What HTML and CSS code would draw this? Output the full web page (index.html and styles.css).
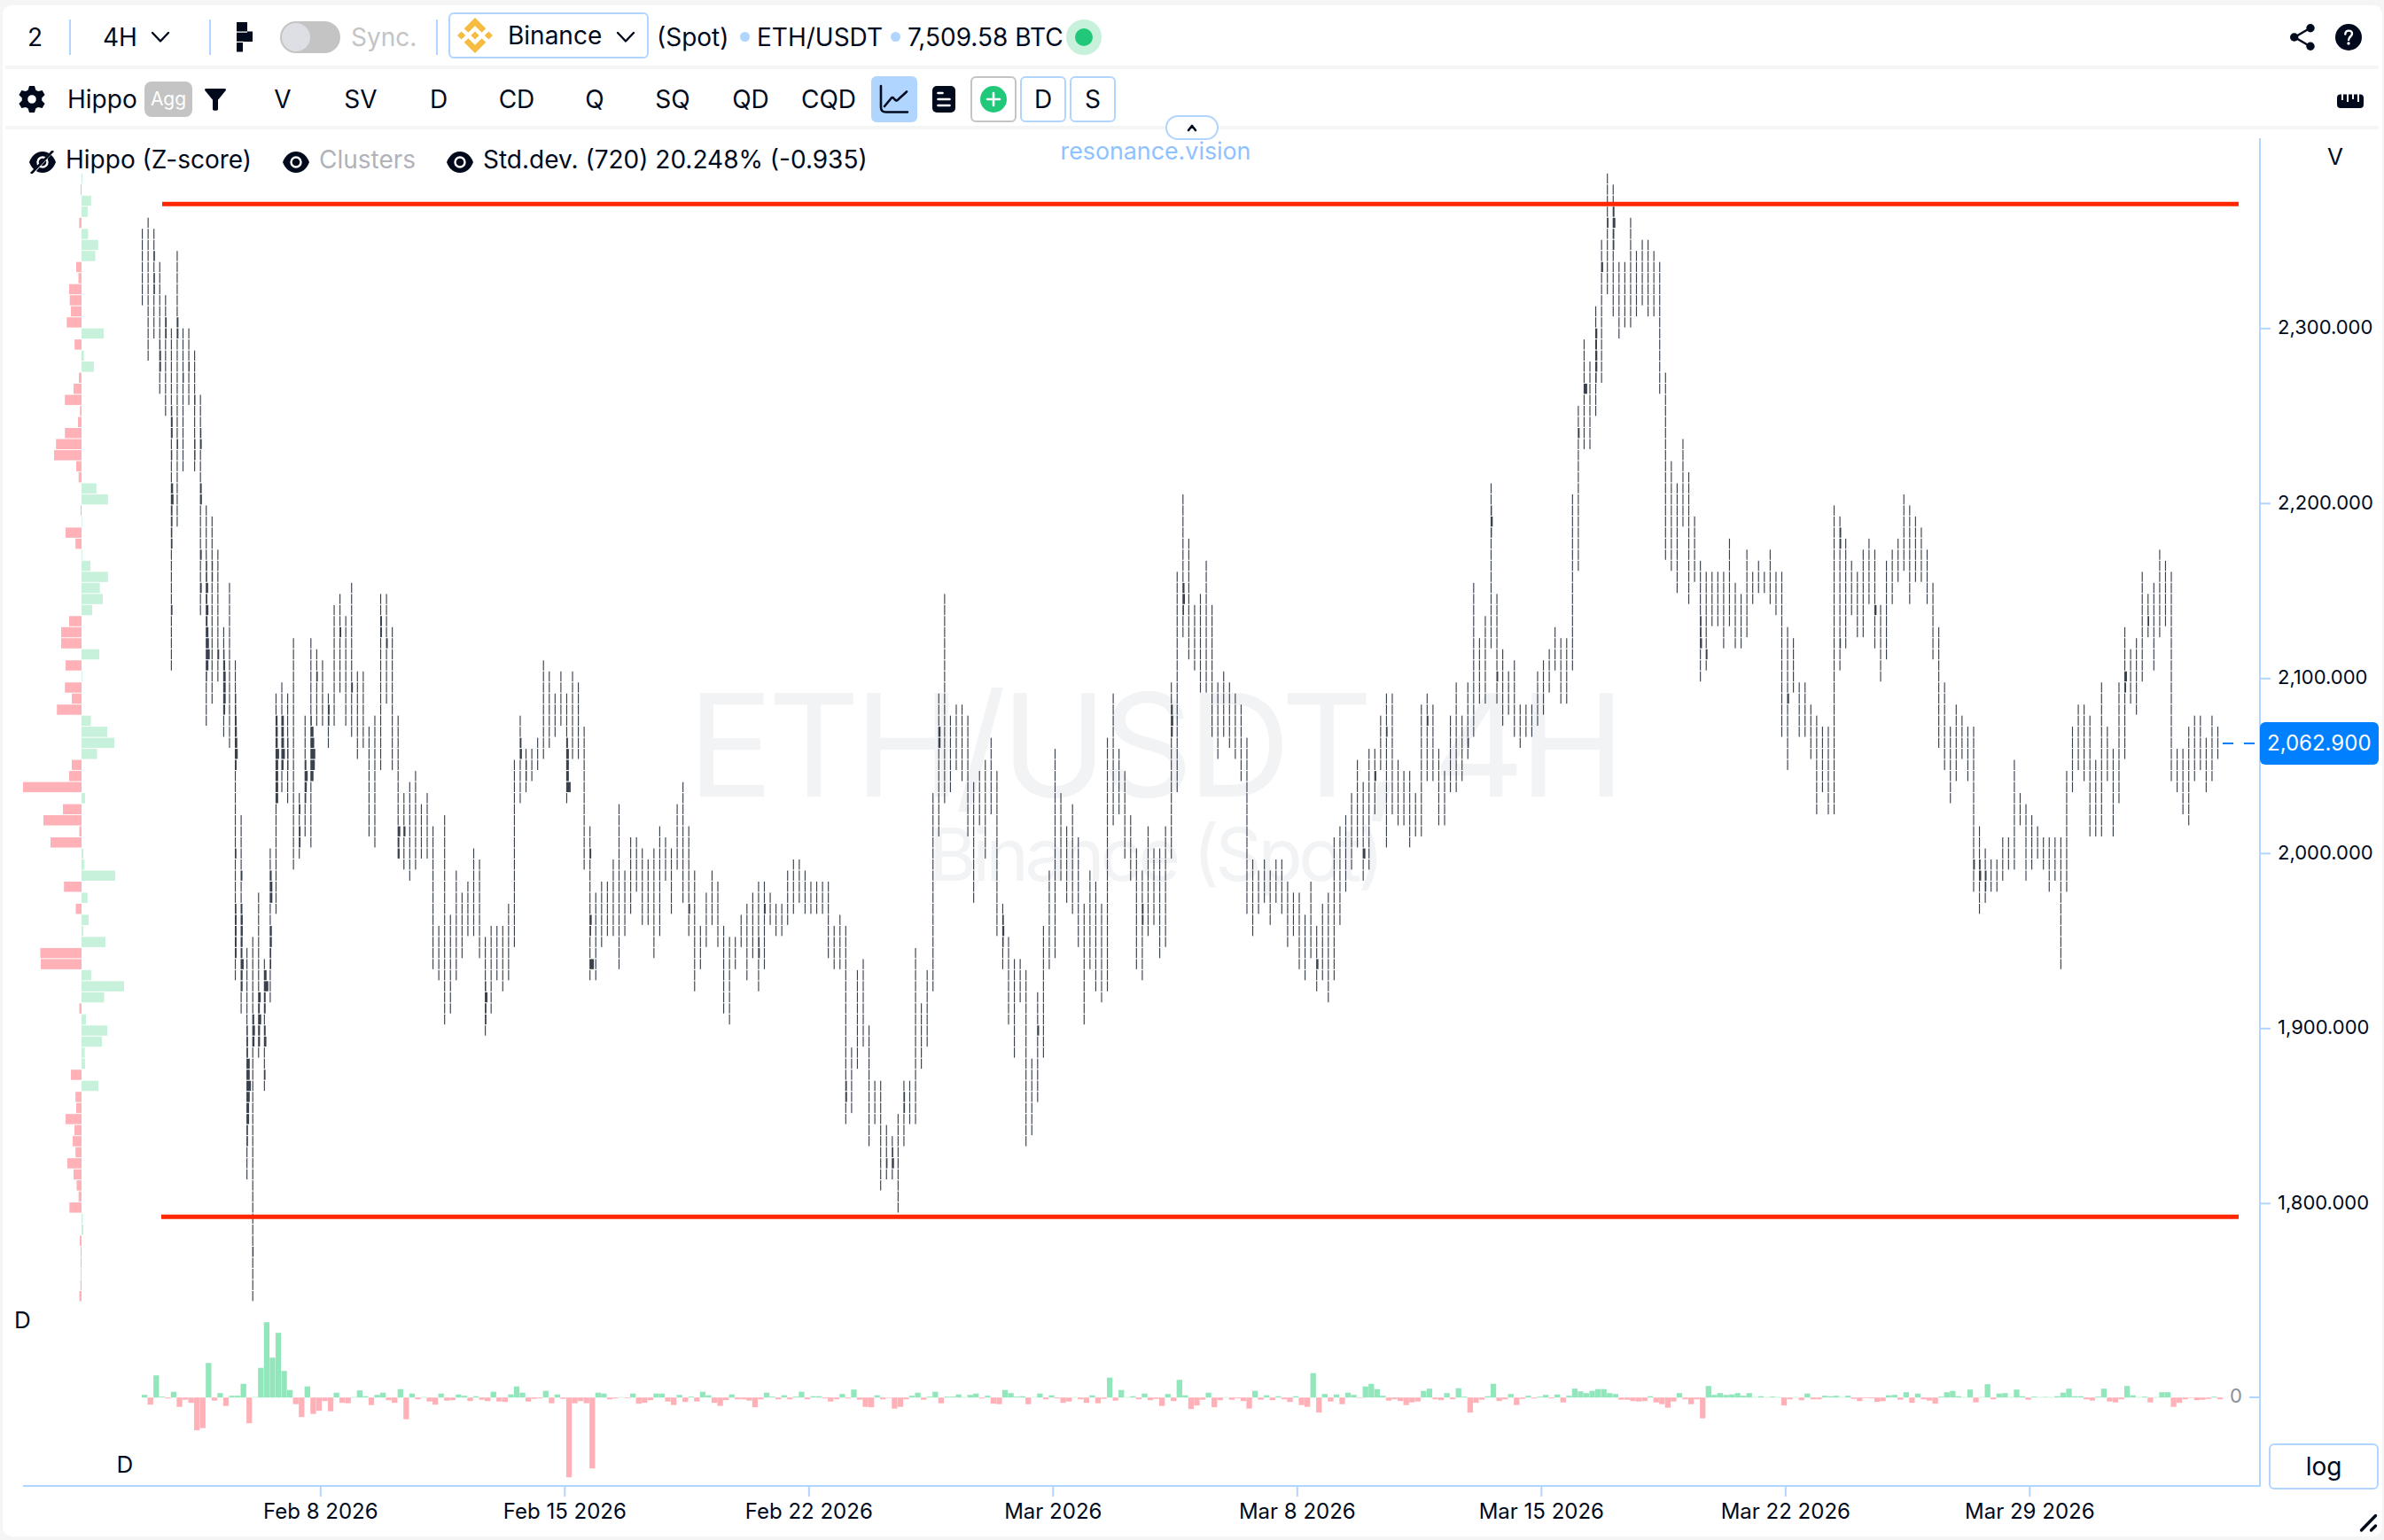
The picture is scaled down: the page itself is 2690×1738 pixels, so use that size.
FILE: index.html
```html
<!DOCTYPE html>
<html lang="en">
<head>
	<meta charset="utf-8">
	<title>ETH/USDT 4H</title>
	<link rel="stylesheet" href="styles.css">
</head>
<body>
	<div class="panel">
		<div class="bar top">
			<span class="number">2</span>
			<i class="sep"></i>
			<div class="timeframe">4H
				<svg class="chevron" width="22" height="14" viewBox="0 0 22 14"><path d="M2 2l9 9.500l9-9.500"/></svg>
			</div>
			<i class="sep"></i>
			<svg class="cluster-icon" width="18" height="34" viewBox="0 0 18 34"><path d="M0 0h12v10.500h6v11.500H7v11.500H0V22.500h0V12h0z"/><path class="cut" d="M0 11.200h12M0 22.400h8"/></svg>
			<div class="toggle"><i></i></div>
			<span class="sync">Sync.</span>
			<i class="sep"></i>
			<div class="select">
				<svg width="40" height="40" viewBox="0 0 40 40"><path d="M20 0l12.300 12.200-4.600 4.600L20 9.200l-7.700 7.600-4.600-4.600zM20 40l12.300-12.200-4.600-4.600L20 30.800l-7.700-7.600-4.600 4.600zM4.600 15.400L9.200 20l-4.600 4.600L0 20zM35.400 15.400L40 20l-4.600 4.600-4.600-4.600zM20 15.400l4.600 4.600-4.600 4.600-4.600-4.600z"/></svg>
				<span>Binance</span>
				<svg class="chevron" width="22" height="14" viewBox="0 0 22 14"><path d="M2 2l9 9.500l9-9.500"/></svg>
			</div>
			<span class="spot">(Spot)</span>
			<i class="dot"></i>
			<span class="pair">ETH/USDT</span>
			<i class="dot"></i>
			<span class="volume">7,509.58 BTC</span>
			<i class="status"></i>
			<div class="right">
				<svg width="28" height="30" viewBox="0 0 28 30"><path class="line" d="M23 4.500L5 15l18 10.500"/><circle cx="23" cy="4.700" r="4.700"/><circle cx="4.700" cy="15" r="4.700"/><circle cx="23" cy="25.300" r="4.700"/></svg>
				<svg width="30" height="30" viewBox="0 0 30 30"><circle cx="15" cy="15" r="15"/><path class="mark" d="M11.300 11.500c0-2.500 1.600-3.900 3.800-3.900s3.900 1.400 3.900 3.500c0 3.200-3.900 3.200-3.900 6.900"/><circle class="point" cx="15" cy="22" r="1.700"/></svg>
			</div>
		</div>

		<div class="bar tools">
			<svg class="gear" width="30" height="30" viewBox="0 0 30 30"><path fill-rule="evenodd" d="M12 0h6l1.300 4.600 2.600 1.500 4.700-1.200 3 5.200-3.400 3.400v3l3.400 3.400-3 5.200-4.700-1.200-2.600 1.500L18 30h-6l-1.300-4.600-2.600-1.500-4.700 1.200-3-5.200 3.400-3.400v-3L.4 10.100l3-5.200 4.700 1.200 2.600-1.500zM15 10.200a4.800 4.800 0 1 0 0 9.600 4.800 4.800 0 0 0 0-9.600z"/></svg>
			<span class="name">Hippo</span>
			<span class="agg">Agg</span>
			<svg class="filter" width="24" height="25" viewBox="0 0 24 25"><path d="M1.500 0h21c1.300 0 1.900 1.300 1.100 2.300L15 12.800V23c0 1-.8 1.700-1.700 1.700h-2.600C9.700 24.700 9 24 9 23V12.800L.4 2.300C-.4 1.300.2 0 1.500 0z"/></svg>
			<div class="tabs">
				<span>V</span><span>SV</span><span>D</span><span>CD</span><span>Q</span><span>SQ</span><span>QD</span><span>CQD</span>
			</div>
			<div class="buttons">
				<div class="btn active"><svg width="34" height="34" viewBox="0 0 34 34"><path class="line" d="M2 2v24c0 3.300 2 5.500 5.500 5.500H32M6 25l7.500-9c1-1.200 2-1.200 3 0l1.500 1.700c1 1.200 2 1.100 3 0L31 8.500"/></svg></div>
				<div class="btn plain"><svg width="26" height="30" viewBox="0 0 26 30"><rect width="26" height="30" rx="5"/><path class="rows" d="M6.500 8h5M6.500 15h13M6.500 22h13"/></svg></div>
				<div class="btn gray"><svg width="30" height="30" viewBox="0 0 30 30"><circle class="green" cx="15" cy="15" r="15"/><path class="rows" d="M15 8v14M8 15h14"/></svg></div>
				<div class="btn">D</div>
				<div class="btn">S</div>
			</div>
			<svg class="ruler" width="30" height="16" viewBox="0 0 30 16"><path d="M4 .5h22a4 4 0 0 1 4 4V12a4 4 0 0 1-4 4H4a4 4 0 0 1-4-4V4.500a4 4 0 0 1 4-4z"/><path class="teeth" d="M6 0v7M12 0v9M18 0v6M24 0v9"/></svg>
			<div class="collapse"><svg width="14" height="10" viewBox="0 0 14 10"><path class="line" d="M3 8l4-5l4 5"/></svg></div>
		</div>

		<div class="chart">
			<svg id="plot" width="2685" height="1588" viewBox="3 146 2685 1588">
				<text class="mark-big" x="776" y="898.500" textLength="1058">ETH/USDT, 4H</text>
				<text class="mark-small" x="1048" y="994" textLength="514">Binance (Spot)</text>
				<g id="profile"></g>
				<g id="delta"></g>
				<g id="candles"></g>
				<path class="level" d="M183 230.200H2526M182 1373.300H2526"/>
				<path class="last" d="M2508 839H2544"/>
				<path class="axis" d="M2550 156V1677M26 1677H2551M2538 1577H2550"/>
				<g id="ticks"></g>
				<text class="scale-name" x="2626" y="186">V</text>
				<text class="scale-name" x="16" y="1499">D</text>
				<text class="scale-name" x="131.500" y="1662">D</text>
				<text class="zero" x="2516" y="1583">0</text>
				<rect class="price" x="2550" y="815" width="134" height="48" rx="6"/>
				<text class="price-text" x="2558" y="847">2,062.900</text>
				<path class="resize" d="M2664.500 1727L2680.500 1710.500M2675.500 1727l5-5"/>
			</svg>
			<div class="legend">
				<svg width="30" height="26" viewBox="0 0 30 26"><path d="M0 13C3 5 8.500 1 15 1s12 4 15 12c-3 8-8.500 12-15 12S3 21 0 13z"/><circle class="ring" cx="15" cy="13" r="5.500"/><path class="slash-bg" d="M4 25L28-1"/><path class="slash" d="M2 26L27 0"/></svg>
				<span class="l-hippo">Hippo (Z-score)</span>
				<svg width="30" height="26" viewBox="0 0 30 26"><path d="M0 13C3 5 8.500 1 15 1s12 4 15 12c-3 8-8.500 12-15 12S3 21 0 13z"/><circle class="ring" cx="15" cy="13" r="5.500"/><circle cx="15" cy="13" r="2.500"/></svg>
				<span class="l-clusters">Clusters</span>
				<svg width="30" height="26" viewBox="0 0 30 26"><path d="M0 13C3 5 8.500 1 15 1s12 4 15 12c-3 8-8.500 12-15 12S3 21 0 13z"/><circle class="ring" cx="15" cy="13" r="5.500"/><circle cx="15" cy="13" r="2.500"/></svg>
				<span>Std.dev. (720) 20.248% (-0.935)</span>
			</div>
			<div class="brand">resonance.vision</div>
			<div class="log">log</div>
		</div>
	</div>
	<script src="script.js"></script>
</body>
</html>
```

FILE: styles.css
```css
* {
	box-sizing: border-box;
}
body {
	margin: 0;
	padding: 6px 2px 4px 3px;
	height: 1738px;
	background-color: #f5f5f5;
	font-family: Inter, "Liberation Sans", sans-serif;
	font-size: 28px;
	line-height: 34px;
	color: #000a1c;
	overflow: hidden;
}
svg {
	display: block;
	flex: none;
	fill: #000a1c;
}
.panel {
	height: 1728px;
	background-color: white;
	border-radius: 10px;
}
.bar {
	display: flex;
	align-items: center;
	margin: 0 4px 0 3px;
	padding-top: 4px;
	border-bottom: 4px solid #f5f5f5;
	white-space: nowrap;
}
.top {
	height: 72px;
}
.tools {
	position: relative;
	height: 68px;
}
.line {
	fill: none;
	stroke: #000a1c;
	stroke-width: 2.6;
	stroke-linecap: round;
	stroke-linejoin: round;
}
.chevron {
	fill: none;
	stroke: #000a1c;
	stroke-width: 2.4;
	stroke-linecap: round;
	stroke-linejoin: round;
}

/* top bar */
.number {
	width: 72px;
	padding-left: 25px;
}
.sep {
	flex: none;
	width: 2px;
	height: 40px;
	background-color: #b0d6ff;
}
.timeframe {
	display: flex;
	align-items: center;
	gap: 15px;
	width: 156px;
	padding-left: 36px;
}
.cluster-icon {
	margin: 0 31px 0 29px;
}
.cut {
	stroke: white;
	stroke-width: 1.2;
}
.toggle {
	flex: none;
	width: 68px;
	height: 36px;
	border-radius: 18px;
	background-color: #c4c4c4;
}
.toggle i {
	display: block;
	width: 32px;
	height: 32px;
	margin: 2px;
	border-radius: 50%;
	background-color: #dedfe4;
}
.sync {
	width: 108px;
	padding-left: 12px;
	color: #c4c4c4;
}
.select {
	display: flex;
	align-items: center;
	width: 226px;
	height: 52px;
	margin: -4px 9px 0 12px;
	padding: 0 8px;
	border: 2px solid #b0d6ff;
	border-radius: 6px;
}
.select > svg:first-child {
	fill: #f5bc41;
}
.select span {
	width: 139px;
	padding-left: 17px;
	margin-top: -1px;
}
.select .chevron {
	margin-top: 4px;
}
.spot {
	width: 94px;
}
.dot {
	flex: none;
	width: 11px;
	height: 11px;
	margin-top: -2px;
	border-radius: 50%;
	background-color: #b0d6ff;
}
.pair {
	width: 159px;
	padding-left: 8px;
}
.volume {
	width: 187px;
	padding-left: 8px;
}
.status {
	flex: none;
	width: 40px;
	height: 40px;
	border: 10px solid #c8f1db;
	border-radius: 50%;
	background-color: #22c879;
}
.right {
	display: flex;
	gap: 23px;
	margin-left: auto;
	padding-right: 19px;
}
.mark {
	fill: none;
	stroke: white;
	stroke-width: 2.4;
	stroke-linecap: round;
}
.point {
	fill: white;
}

/* tools bar */
.gear {
	margin: 0 25px 0 15px;
}
.name {
	width: 87px;
}
.agg {
	width: 54px;
	height: 40px;
	border-radius: 8px;
	background-color: #c4c4c4;
	color: white;
	font-size: 21px;
	line-height: 40px;
	text-align: center;
}
.filter {
	margin: 0 22px 0 14px;
}
.tabs, .buttons {
	display: flex;
	gap: 4px;
}
.tabs span {
	width: 84px;
	text-align: center;
}
.buttons {
	margin-left: 6px;
}
.btn {
	display: flex;
	align-items: center;
	justify-content: center;
	width: 52px;
	height: 52px;
	border: 2px solid #b0d6ff;
	border-radius: 6px;
}
.active {
	background-color: #b0d6ff;
}
.plain {
	border-color: transparent;
}
.gray {
	border-color: #c4c4c4;
}
.green {
	fill: #22c879;
}
.rows {
	stroke: white;
	stroke-width: 2.6;
	stroke-linecap: round;
}
.ruler {
	margin-left: auto;
	margin-right: 17px;
	margin-top: 4px;
}
.teeth {
	stroke: white;
	stroke-width: 2;
}
.collapse {
	position: absolute;
	z-index: 2;
	left: 1309px;
	bottom: -16px;
	display: flex;
	align-items: center;
	justify-content: center;
	width: 60px;
	height: 28px;
	border: 2px solid #b0d6ff;
	border-radius: 14px;
	background-color: white;
}

/* chart */
.chart {
	position: relative;
	height: 1588px;
}
.legend {
	position: absolute;
	left: 30px;
	top: 17px;
	display: flex;
	align-items: center;
	gap: 11px;
	white-space: nowrap;
}
.legend svg {
	margin-top: 6px;
}
.l-hippo {
	width: 234px;
}
.l-clusters {
	width: 133px;
	color: #b0b3ba;
}
.ring {
	fill: none;
	stroke: white;
	stroke-width: 2.4;
}
.slash-bg {
	stroke: white;
	stroke-width: 3;
}
.slash {
	stroke: #000a1c;
	stroke-width: 2.6;
}
.brand {
	position: absolute;
	left: 1193.5px;
	top: 7px;
	font-size: 26.8px;
	color: #8ec2ff;
}
.log {
	position: absolute;
	left: 2557px;
	top: 1483px;
	width: 124px;
	height: 52px;
	border: 2px solid #b0d6ff;
	border-radius: 6px;
	line-height: 48px;
	text-align: center;
}
.mark-big {
	font-size: 161px;
	fill: #f2f3f5;
}
.mark-small {
	font-size: 82px;
	fill: #f2f3f5;
}
#candles {
	fill: #3a414e;
}
.profile-up {
	fill: #c8f1db;
}
.down {
	fill: #ffb1b7;
}
.delta-up {
	fill: #92e6bb;
}
.level {
	stroke: #ff2600;
	stroke-width: 5;
}
.last {
	stroke: #0080ff;
	stroke-width: 2;
	stroke-dasharray: 12;
}
.axis, .tick {
	fill: none;
	stroke: #b0d6ff;
	stroke-width: 2;
}
.scale-name {
	font-size: 26px;
}
.scale-text {
	font-size: 22px;
}
.date-text {
	font-size: 24px;
	text-anchor: middle;
}
.zero {
	font-size: 22px;
	fill: #8a8f98;
}
.price {
	fill: #0080ff;
}
.price-text {
	font-size: 24px;
	fill: white;
}
.resize {
	stroke: #000a1c;
	stroke-width: 3.4;
	stroke-linecap: round;
}
```

FILE: script.js
```js
var NS = 'http://www.w3.org/2000/svg';
var ROW = 12.487, TOP = 195.8;
var STEP = 6.56, LEFT = 160;

// first row and end row of every candle
var candles = ('5-12 4-17 5-15 8-20 11-22 14-45 7-32 14-27 14-21 16-27 20-40 30-50 31-48 34-46 41-51 37-52 44-73 58-76 70-91 69-102 ' +
	'65-80 71-83 61-75 47-67 46-56 47-57 42-63 56-62 49-60 42-61 43-50 44-50 47-52 39-50 38-47 40-50 37-51 45-53 45-52 50-60 ' +
	'49-61 38-54 38-48 41-54 49-62 56-63 55-64 54-63 57-62 56-62 59-72 68-73 58-77 67-76 63-73 65-71 64-69 61-69 62-71 69-78 ' +
	'68-76 68-73 68-74 66-73 53-70 49-57 52-56 52-55 51-54 44-53 45-52 47-51 45-50 47-57 45-53 46-53 50-63 59-73 65-73 64-70 ' +
	'64-69 62-69 57-72 63-69 60-67 60-65 61-68 62-68 61-71 59-69 60-64 61-67 57-63 55-66 59-69 63-74 68-72 65-70 63-68 64-70 ' +
	'68-76 69-77 69-72 67-70 66-73 65-71 64-74 64-72 65-68 66-69 66-69 63-68 62-67 62-66 63-67 64-67 64-67 64-67 64-71 68-72 ' +
	'67-72 68-86 79-85 72-81 71-79 77-88 82-86 82-92 86-91 87-91 85-94 82-88 82-86 70-86 75-81 72-79 56-74 47-60 38-57 49-56 ' +
	'48-54 48-55 49-60 55-66 54-59 53-62 51-58 54-69 66-72 69-77 71-80 71-75 72-88 80-87 74-84 68-80 63-72 52-71 56-64 59-66 ' +
	'57-67 60-70 66-77 63-72 64-74 66-75 51-74 47-59 52-58 54-62 58-64 61-72 63-73 59-69 61-68 61-71 59-70 46-62 36-56 29-42 ' +
	'33-44 39-45 38-47 35-47 39-51 46-53 45-51 46-52 47-53 48-55 51-67 62-69 63-67 62-66 63-68 62-66 62-67 64-70 65-69 65-72 ' +
	'67-73 64-71 68-74 66-73 65-75 60-73 59-68 58-65 56-63 53-61 55-64 52-63 52-58 49-54 47-61 47-58 53-59 54-59 54-61 56-60 ' +
	'48-60 47-55 48-55 52-59 54-59 49-56 46-56 49-55 46-53 37-51 42-48 40-48 28-43 38-48 43-50 45-49 44-51 48-52 48-51 48-51 ' +
	'45-50 44-49 43-47 41-45 42-48 42-48 29-45 21-36 15-25 17-25 12-22 6-19 0-11 1-13 8-15 8-14 4-14 7-13 6-12 6-13 ' +
	'7-13 8-20 18-35 26-36 28-38 24-32 27-39 31-37 35-46 36-45 36-41 36-41 36-43 33-41 37-43 38-43 34-42 36-39 35-38 36-38 ' +
	'34-39 36-40 36-51 41-54 42-47 46-51 46-51 48-53 49-58 50-56 50-58 30-58 31-45 33-43 35-40 36-42 34-42 33-39 34-43 39-46 ' +
	'35-44 34-39 33-37 29-36 30-39 31-37 32-37 34-39 37-44 41-52 46-54 50-57 48-55 49-53 50-55 50-65 59-67 61-66 62-65 62-65 ' +
	'60-64 60-63 53-63 56-59 57-64 58-63 59-62 60-63 60-65 60-64 60-72 54-65 50-56 48-54 48-55 49-60 53-60 46-60 50-55 52-60 ' +
	'46-57 41-53 43-48 42-49 36-46 38-42 37-45 34-42 35-41 36-55 52-56 52-58 50-59 49-55 49-54 51-56 49-55 50-53').split(' ');

// wide clusters: candle -> row:width
var wide = {
	2: '7:1.7 9:1.7 10:1.7', 3: '15:1.4 16:2 17:2', 4: '13:1.8 14:1.8',
	5: '21:1.5 22:2 23:2 25:1.5 28:2.5 29:3 30:1.8 31:1.8 32:1.6 33:1.8 39:1.8', 6: '13:2 14:2 24:1.6', 7: '18:1.5', 8: '17:1.5',
	9: '20:1.5 24:1.5 25:1.5', 10: '23:1.6 24:2 28:2 29:2.2 34:2 37:2',
	11: '35:1.6 36:1.6 37:2.7 38:1.8 39:3 40:2 41:3 42:3.6 43:4.5 44:3 45:1.5', 12: '35:1.5 36:1.5', 13: '43:2',
	14: '43:1.5 44:2.2 45:2.8 46:2.8 47:2.8 48:2.2', 16: '47:1.5 48:1.5 49:2 50:2.3 51:2.8 52:3.3 53:2 61:1.8 66:1.8 67:2 68:2 69:2 70:2',
	17: '63:2 66:2 67:2.4 68:2.4 69:2.2 70:2 71:3.4 72:2.2 73:2.2', 18: '77:1.6 78:1.8 79:1.8 80:3.7 81:3.7 82:5 83:3.7 84:3 85:3 86:1.7 87:1.7',
	19: '76:2.2 77:3 78:2.5 97:1.5', 20: '74:3 75:2 76:3.5 77:2.2 78:2.2', 21: '72:3 73:5 74:2 75:2 77:2 78:2.8 81:1.8',
	22: '63:2.2 64:3 65:3 68:2.4 69:2.4 70:1.7 71:1.7', 23: '49:2.3 50:2.5 51:2.5 52:4 53:3 54:3 55:3 56:3', 24: '49:2.8 50:2.8 51:3 52:4 53:2.5',
	25: '51:1.5 52:1.5 53:1.5', 27: '57:1.8 59:2 60:2', 28: '53:2 54:3.5 55:2.5 56:1.8', 29: '49:1.6 50:3.5 51:4.3 52:5.5 53:5 54:3.5',
	30: '45:1.8', 32: '48:2 49:1.7', 34: '41:2', 36: '46:2', 41: '40:2 41:2', 42: '42:2', 44: '59:3 60:2 61:2.3', 45: '59:2.3',
	59: '73:1.5 74:3 75:1.8 76:1.8', 65: '51:2 52:2.5', 66: '53:1.5 54:1.5', 73: '51:2 52:3 53:3 54:3 55:5', 77: '61:2 67:2.5 68:1.8 71:5',
	94: '66:2', 106: '69:1.7 70:2', 107: '66:2', 121: '82:1.8 83:2', 128: '89:1.7', 129: '88:1.7 89:2.5', 131: '83:1.8 84:1.8',
	137: '50:2.5 51:2.5', 148: '67:1.8 68:2.3 69:1.6', 154: '77:2.2', 172: '66:2 67:2', 177: '48:2.2 49:2.7 50:2.2', 179: '37:2.3 38:2.8 39:1.7',
	202: '71:2.5', 210: '61:3', 212: '54:2.2', 214: '50:1.8', 221: '49:2', 228: '51:1.8', 232: '30:1.5 31:2.4 32:1.5', 233: '45:2', 247: '23:2', 248: '19:4',
	250: '14:2.3 15:2 16:2.3 17:2.3 18:1.6', 251: '8:2.3', 252: '4:1.8', 253: '3:2 4:3 5:1.8 6:1.8', 268: '40:1.8 41:1.8 42:2.4', 269: '43:2',
	283: '47:2.2', 292: '32:2 33:2 42:1.7', 298: '39:2.5', 315: '62:2', 316: '62:1.8 63:2.5', 317: '63:2 64:1.7', 341: '45:3 46:2', 345: '40:1.8'
};

var profile = [1, -1, 10.8, 7, -2.7, 7.5, 18.8, 15.5, -6, -3.5, -14, -13.3, -12, -16.7, 25, -7.8, 2.7, 14, -3, -9,
	-18.8, -1.7, -4, -18.8, -28.8, -31, -6, -3.3, 16.8, 29.8, -1, .7, -18, -6.8, .8, 10, 29.8, 20.7, 24, 12,
	-14, -23, -23, 20, -18, .8, -18.8, -11, -27.8, 10.5, 29, 37, 17.5, -11, -14, -66, 4, -21, -43, -2.5,
	-35, 2, 3.3, 38, -19.8, 6.8, -6.5, 8, 1.8, 27, -46.5, -46, 11, 48, 25.5, -2.5, 5, 29, 23, 3.7,
	4, -12, 19, -6.8, -6, -18, -8, -10, -6.8, -16, -9, -5.5, -3.3, -13.7, 1.3, 2, -2, -1, -1, -.7, -1.2, -2.5];

var delta = [3, -8, 25, 1, -1, 6.5, -10.5, -2.5, -6, -37, -34.5, 39, -3.5, 5, -9.5, 2, 2, 15.5, -29, .5,
	33.5, 85, 45, 73, 30, 8.5, -7.5, -22, 12.5, -18.5, -15, -4, -15.5, 5.5, -6, -6.5, .5, 8, 1.5, -8.5,
	3, 5.5, -3, -6, 9.5, -24.5, 4.5, -2, .5, -4.5, -8, 4.5, -3.5, -3, 3.5, 2, -4, 1.5, -2.5, -4,
	6.5, -4.5, -5, 3.5, 12.5, 5.5, -4.5, -1.5, -1, 7.5, -6.5, 3.5, -1.5, -90, -6.5, -4, -6.5, -80, 5.5, 4.5,
	-2, -1, 0, -.7, 4.5, -7, -6, -3, 4.5, 4.5, -4.5, -8.5, 3, -5, 1, -4.5, 6.5, 2.5, -6, -9.5,
	-3, 3.5, -2, -2, -3.5, -11, -2, 5.5, 1, -2, 2.5, -2, 1, 6.5, -2, 1.5, 1.5, -1, -4.5, -2,
	4, -1, 9, -2.5, -10.5, -11, 2.5, -2, -.5, -12.5, -10.5, -2, 2, 5.5, -2.5, 1, 6.5, -6.5, 1, 1,
	3.5, 0, 3, 4.5, -1, 2, -7, -7.5, 8.5, 5, 1, 1.5, -7.5, 0, 4.5, -2, 2.5, -1, -6, -4.5,
	0, -2, -6, 2.5, -6.5, -1.5, 22.5, -3.5, 8.5, 0, 1.5, -2, 4.5, -3, -1.5, -9.5, 4, -4, 20, 2.5,
	-13, -9, -2.5, 5.5, -11, -3, 0, -2.5, -1, -4, -12.5, 7.5, -2.5, 2.5, -3, 1.5, -2, -5, 1.5, -8.5,
	-10.5, 27.5, -17, 4, -4.5, 3.5, -7.5, 5.5, 3, -.5, 12.5, 15.5, 9.5, 2, -3.5, -2, -4, -8.5, -5.5, -4.5,
	7.5, 10, -2, -3, 5, -2, 10.5, 1, -17, -6, -2.5, 1.5, 15.5, -4, -2, 4, -8.5, -1.5, 2, -1,
	1, 3, -1, 3.5, -5.5, 2, 10, 7, 5, 7.5, 9.5, 9.5, 5, 4, -2.5, -2.5, -4, -4.5, -4, 1.5,
	-5.5, -7.5, -11.5, -4.5, 5, -2, -7.5, -2, -23.5, 13, 3, 5, 3, 3.5, 5, 2, 5, 0, 1.5, 0,
	1, .5, -9, -2, 0, -3, 4.5, -2, -2, 2, 1.5, 2, 0, 2, -1.5, -4, -.7, -1, -5, -4,
	2.5, 3, -2.5, 6, -6, 4.5, -2, -3.5, -7, 1, 6, 7.5, 1.5, 0, 9, -5.5, .5, 15, -2, 4.5,
	5, .5, 9, 1.5, -2.5, 1, 0, .7, 0, 1.5, 5.5, 10, 1.5, 1.5, -2, -3.5, 1, 10, -4.5, -5.5,
	-2, 13, 2.5, 0, 1, -5.5, 0, 6, 6, -10.5, -6, -2, -.5, -3, -2.5, -1.5, 1, -2];

var dates = ['Feb 8 2026', 'Feb 15 2026', 'Feb 22 2026', 'Mar 2026', 'Mar 8 2026', 'Mar 15 2026', 'Mar 22 2026', 'Mar 29 2026'];
var prices = ['2,300.000', '2,200.000', '2,100.000', '2,000.000', '1,900.000', '1,800.000'];

function add(parent, tag, attrs, text) {
	var el = document.createElementNS(NS, tag);
	for (var key in attrs)
		el.setAttribute(key, attrs[key]);
	if (text)
		el.textContent = text;
	parent.appendChild(el);
}

function drawCandles() {
	var box = document.querySelector('#candles');
	candles.forEach(function (c, i) {
		var range = c.split('-');
		var widths = {};
		if (wide[i])
			wide[i].split(' ').forEach(function (w) {
				widths[w.split(':')[0]] = w.split(':')[1];
			});
		for (var row = +range[0]; row < +range[1]; row++)
			add(box, 'rect', {x: (LEFT + STEP * i).toFixed(2), y: (TOP + ROW * row).toFixed(2), width: widths[row] || 1.15, height: 11.4});
	});
}

function drawProfile() {
	var box = document.querySelector('#profile');
	profile.forEach(function (v, row) {
		add(box, 'rect', {class: v > 0 ? 'profile-up' : 'down', x: v > 0 ? 92 : 92 + v, y: (TOP + ROW * row).toFixed(2), width: Math.abs(v), height: 11.5});
	});
}

function drawDelta() {
	var box = document.querySelector('#delta');
	delta.forEach(function (v, i) {
		var h = Math.max(Math.abs(v), .4);
		add(box, 'rect', {class: v >= 0 ? 'delta-up' : 'down', x: (LEFT + STEP * i).toFixed(2), y: v >= 0 ? 1577.2 - h : 1577.2, width: 6.3, height: h});
	});
}

function drawTicks() {
	var box = document.querySelector('#ticks');
	dates.forEach(function (d, i) {
		var x = 361.8 + 275.5 * i;
		add(box, 'path', {class: 'tick', d: 'M' + x + ' 1678V1689'});
		add(box, 'text', {class: 'date-text', x: x, y: 1714}, d);
	});
	prices.forEach(function (p, i) {
		var y = 370.8 + 197.5 * i;
		add(box, 'path', {class: 'tick', d: 'M2551 ' + y + 'H2562'});
		add(box, 'text', {class: 'scale-text', x: 2570, y: y + 6.5}, p);
	});
}

drawProfile();
drawDelta();
drawCandles();
drawTicks();
```
